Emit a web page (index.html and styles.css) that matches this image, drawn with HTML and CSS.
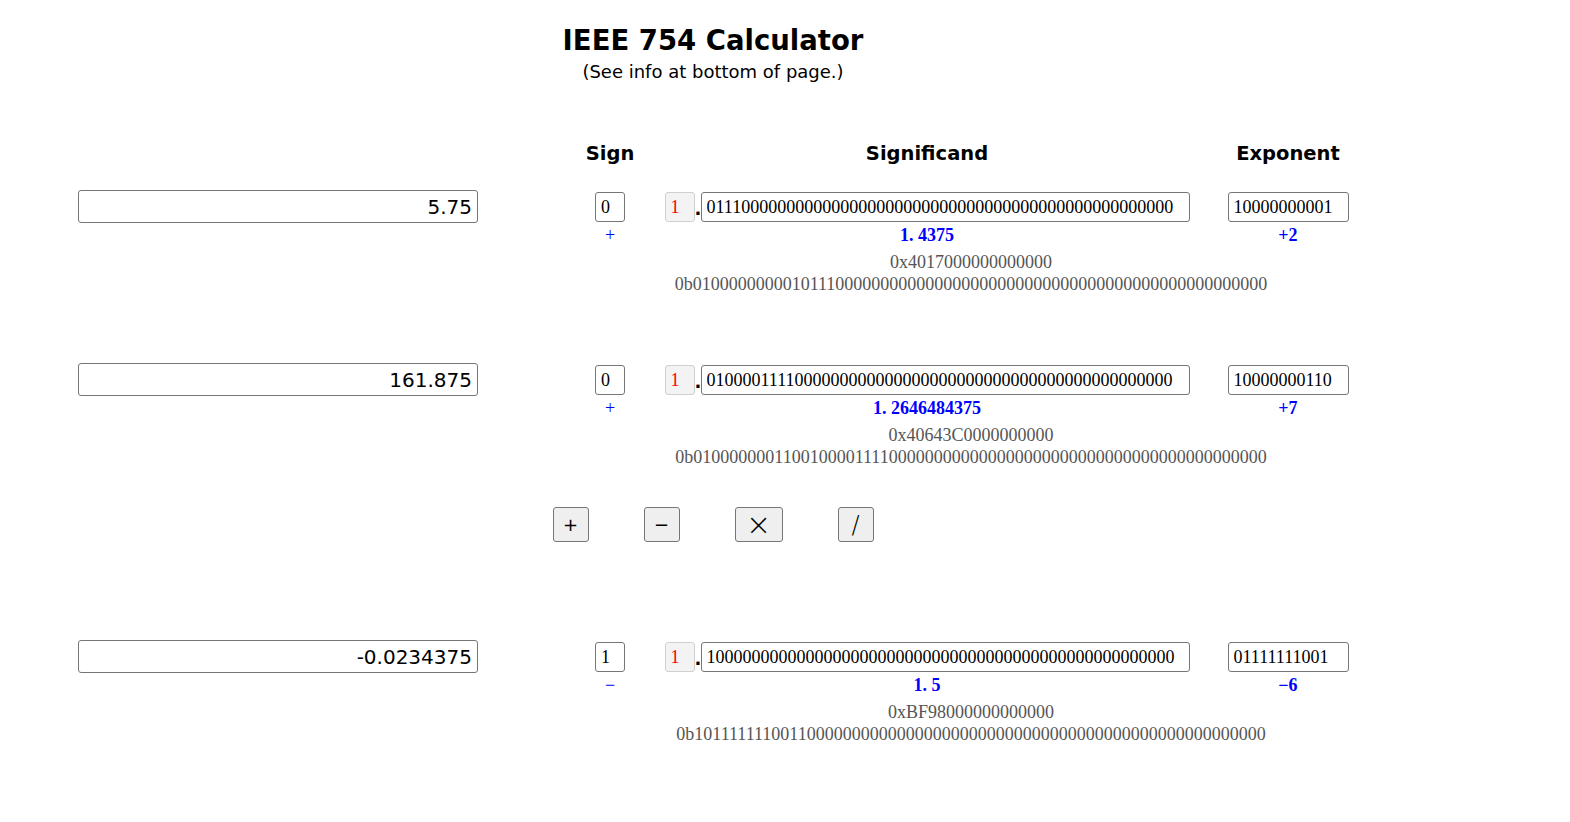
FILE: index.html
```html
<!DOCTYPE html>
<html>
<head>
<meta charset="utf-8">
<title>IEEE 754 Calculator</title>
<link rel="stylesheet" href="styles.css">
</head>
<body>
<header class="head">
  <h1 class="title">IEEE 754 Calculator</h1>
  <p class="subtitle">(See info at bottom of page.)</p>
</header>

<div class="grid labels">
  <span></span>
  <h2 class="label">Sign</h2>
  <h2 class="label">Significand</h2>
  <h2 class="label">Exponent</h2>
</div>

<section class="grid num num-first">
  <input class="dec" type="text" value="5.75">
  <div class="cell"><input class="bit sign" type="text" value="0"></div>
  <div class="cell sig">
    <input class="lead" type="text" value="1" disabled><span class="dot">.</span><input class="bit frac" type="text" value="0111000000000000000000000000000000000000000000000000">
  </div>
  <div class="cell"><input class="bit exp" type="text" value="10000000001"></div>
  <span></span>
  <div class="val sym">+</div>
  <div class="val num-val">1<span class="pt">.</span>4375</div>
  <div class="val num-val">+2</div>
  <div class="raw">0x4017000000000000<br>0b0100000000010111000000000000000000000000000000000000000000000000</div>
</section>

<section class="grid num num-second">
  <input class="dec" type="text" value="161.875">
  <div class="cell"><input class="bit sign" type="text" value="0"></div>
  <div class="cell sig">
    <input class="lead" type="text" value="1" disabled><span class="dot">.</span><input class="bit frac" type="text" value="0100001111000000000000000000000000000000000000000000">
  </div>
  <div class="cell"><input class="bit exp" type="text" value="10000000110"></div>
  <span></span>
  <div class="val sym">+</div>
  <div class="val num-val">1<span class="pt">.</span>2646484375</div>
  <div class="val num-val">+7</div>
  <div class="raw">0x40643C0000000000<br>0b0100000001100100001111000000000000000000000000000000000000000000</div>
</section>

<div class="ops">
  <button class="op" type="button">+</button>
  <button class="op" type="button">&minus;</button>
  <button class="op op-wide" type="button"><span class="times">&times;</span></button>
  <button class="op" type="button"><span class="slash">/</span></button>
</div>

<section class="grid num num-result">
  <input class="dec" type="text" value="-0.0234375">
  <div class="cell"><input class="bit sign" type="text" value="1"></div>
  <div class="cell sig">
    <input class="lead" type="text" value="1" disabled><span class="dot">.</span><input class="bit frac" type="text" value="1000000000000000000000000000000000000000000000000000">
  </div>
  <div class="cell"><input class="bit exp" type="text" value="01111111001"></div>
  <span></span>
  <div class="val sym">&minus;</div>
  <div class="val num-val">1<span class="pt">.</span>5</div>
  <div class="val num-val">&minus;6</div>
  <div class="raw">0xBF98000000000000<br>0b1011111110011000000000000000000000000000000000000000000000000000</div>
</section>
</body>
</html>
```

FILE: styles.css
```css
html, body {
  margin: 0;
  padding: 0;
  background: #ffffff;
}

body {
  font-family: "DejaVu Sans", Verdana, sans-serif;
  color: #000;
  padding-top: 24px;
}

.head {
  width: 1426px;
  text-align: center;
}

.title {
  margin: 0;
  font-size: 27.5px;
  line-height: 32px;
  font-weight: bold;
}

.subtitle {
  margin: 5px 0 0;
  font-size: 18px;
  line-height: 22px;
}

.grid {
  display: grid;
  grid-template-columns: 502px 60px 574px 148px;
  padding-left: 78px;
}

.labels {
  margin-top: 60px;
}

.label {
  margin: 0;
  font-size: 19.5px;
  line-height: 22px;
  font-weight: bold;
  text-align: center;
}

.num {
  margin-top: 25px;
}

.num-second {
  margin-top: 68px;
}

.num-result {
  margin-top: 98px;
}

.dec {
  box-sizing: border-box;
  width: 400px;
  height: 33px;
  margin: 0;
  padding: 0 5px;
  border: 1px solid #767676;
  border-radius: 3px;
  font-family: "DejaVu Sans", Verdana, sans-serif;
  font-size: 20px;
  text-align: right;
  color: #000;
  background: #fff;
}

.cell {
  display: flex;
  justify-content: center;
  align-items: center;
  padding-top: 2px;
  height: 30px;
}

.bit, .lead {
  box-sizing: border-box;
  height: 30px;
  margin: 0;
  padding: 0 5px;
  border: 1px solid #767676;
  border-radius: 3px;
  font-family: "Liberation Serif", "Times New Roman", serif;
  font-size: 18px;
  color: #000;
  background: #fff;
}

.sign {
  width: 30px;
}

.frac {
  width: 489px;
}

.exp {
  width: 121px;
}

.lead {
  width: 30px;
  color: #ff0000;
  background: #f3f3f3;
  border-color: #cfcfcf;
}

.dot {
  display: inline-block;
  width: 6px;
  font-family: "DejaVu Sans", sans-serif;
  font-size: 18px;
  font-weight: bold;
  line-height: 30px;
  padding-top: 4px;
  text-align: center;
}

.val {
  text-align: center;
  line-height: 22px;
  color: #0000ff;
  font-family: "Liberation Serif", "Times New Roman", serif;
  font-size: 18px;
  padding-top: 1px;
}

.num-val {
  font-weight: bold;
}

.pt {
  display: inline-block;
  width: 9px;
  text-align: left;
}

.raw {
  grid-column: 2 / 5;
  margin-top: 5px;
  text-align: center;
  font-family: "Liberation Serif", "Times New Roman", serif;
  font-size: 18px;
  line-height: 22px;
  color: #555;
}

.ops {
  width: 1426px;
  margin-top: 39px;
  display: flex;
  justify-content: center;
  gap: 55px;
}

.op {
  box-sizing: border-box;
  width: 36px;
  height: 35px;
  margin: 0;
  padding: 0;
  border: 1px solid #767676;
  border-radius: 3px;
  background: #efefef;
  color: #000;
  font-family: "DejaVu Sans", Verdana, sans-serif;
  font-size: 18px;
  font-weight: normal;
  line-height: 1;
}

.op-wide {
  width: 48px;
}

.times {
  font-size: 30px;
  font-weight: 200;
  line-height: 1;
}

.slash {
  font-size: 24px;
  font-weight: 200;
}
```
